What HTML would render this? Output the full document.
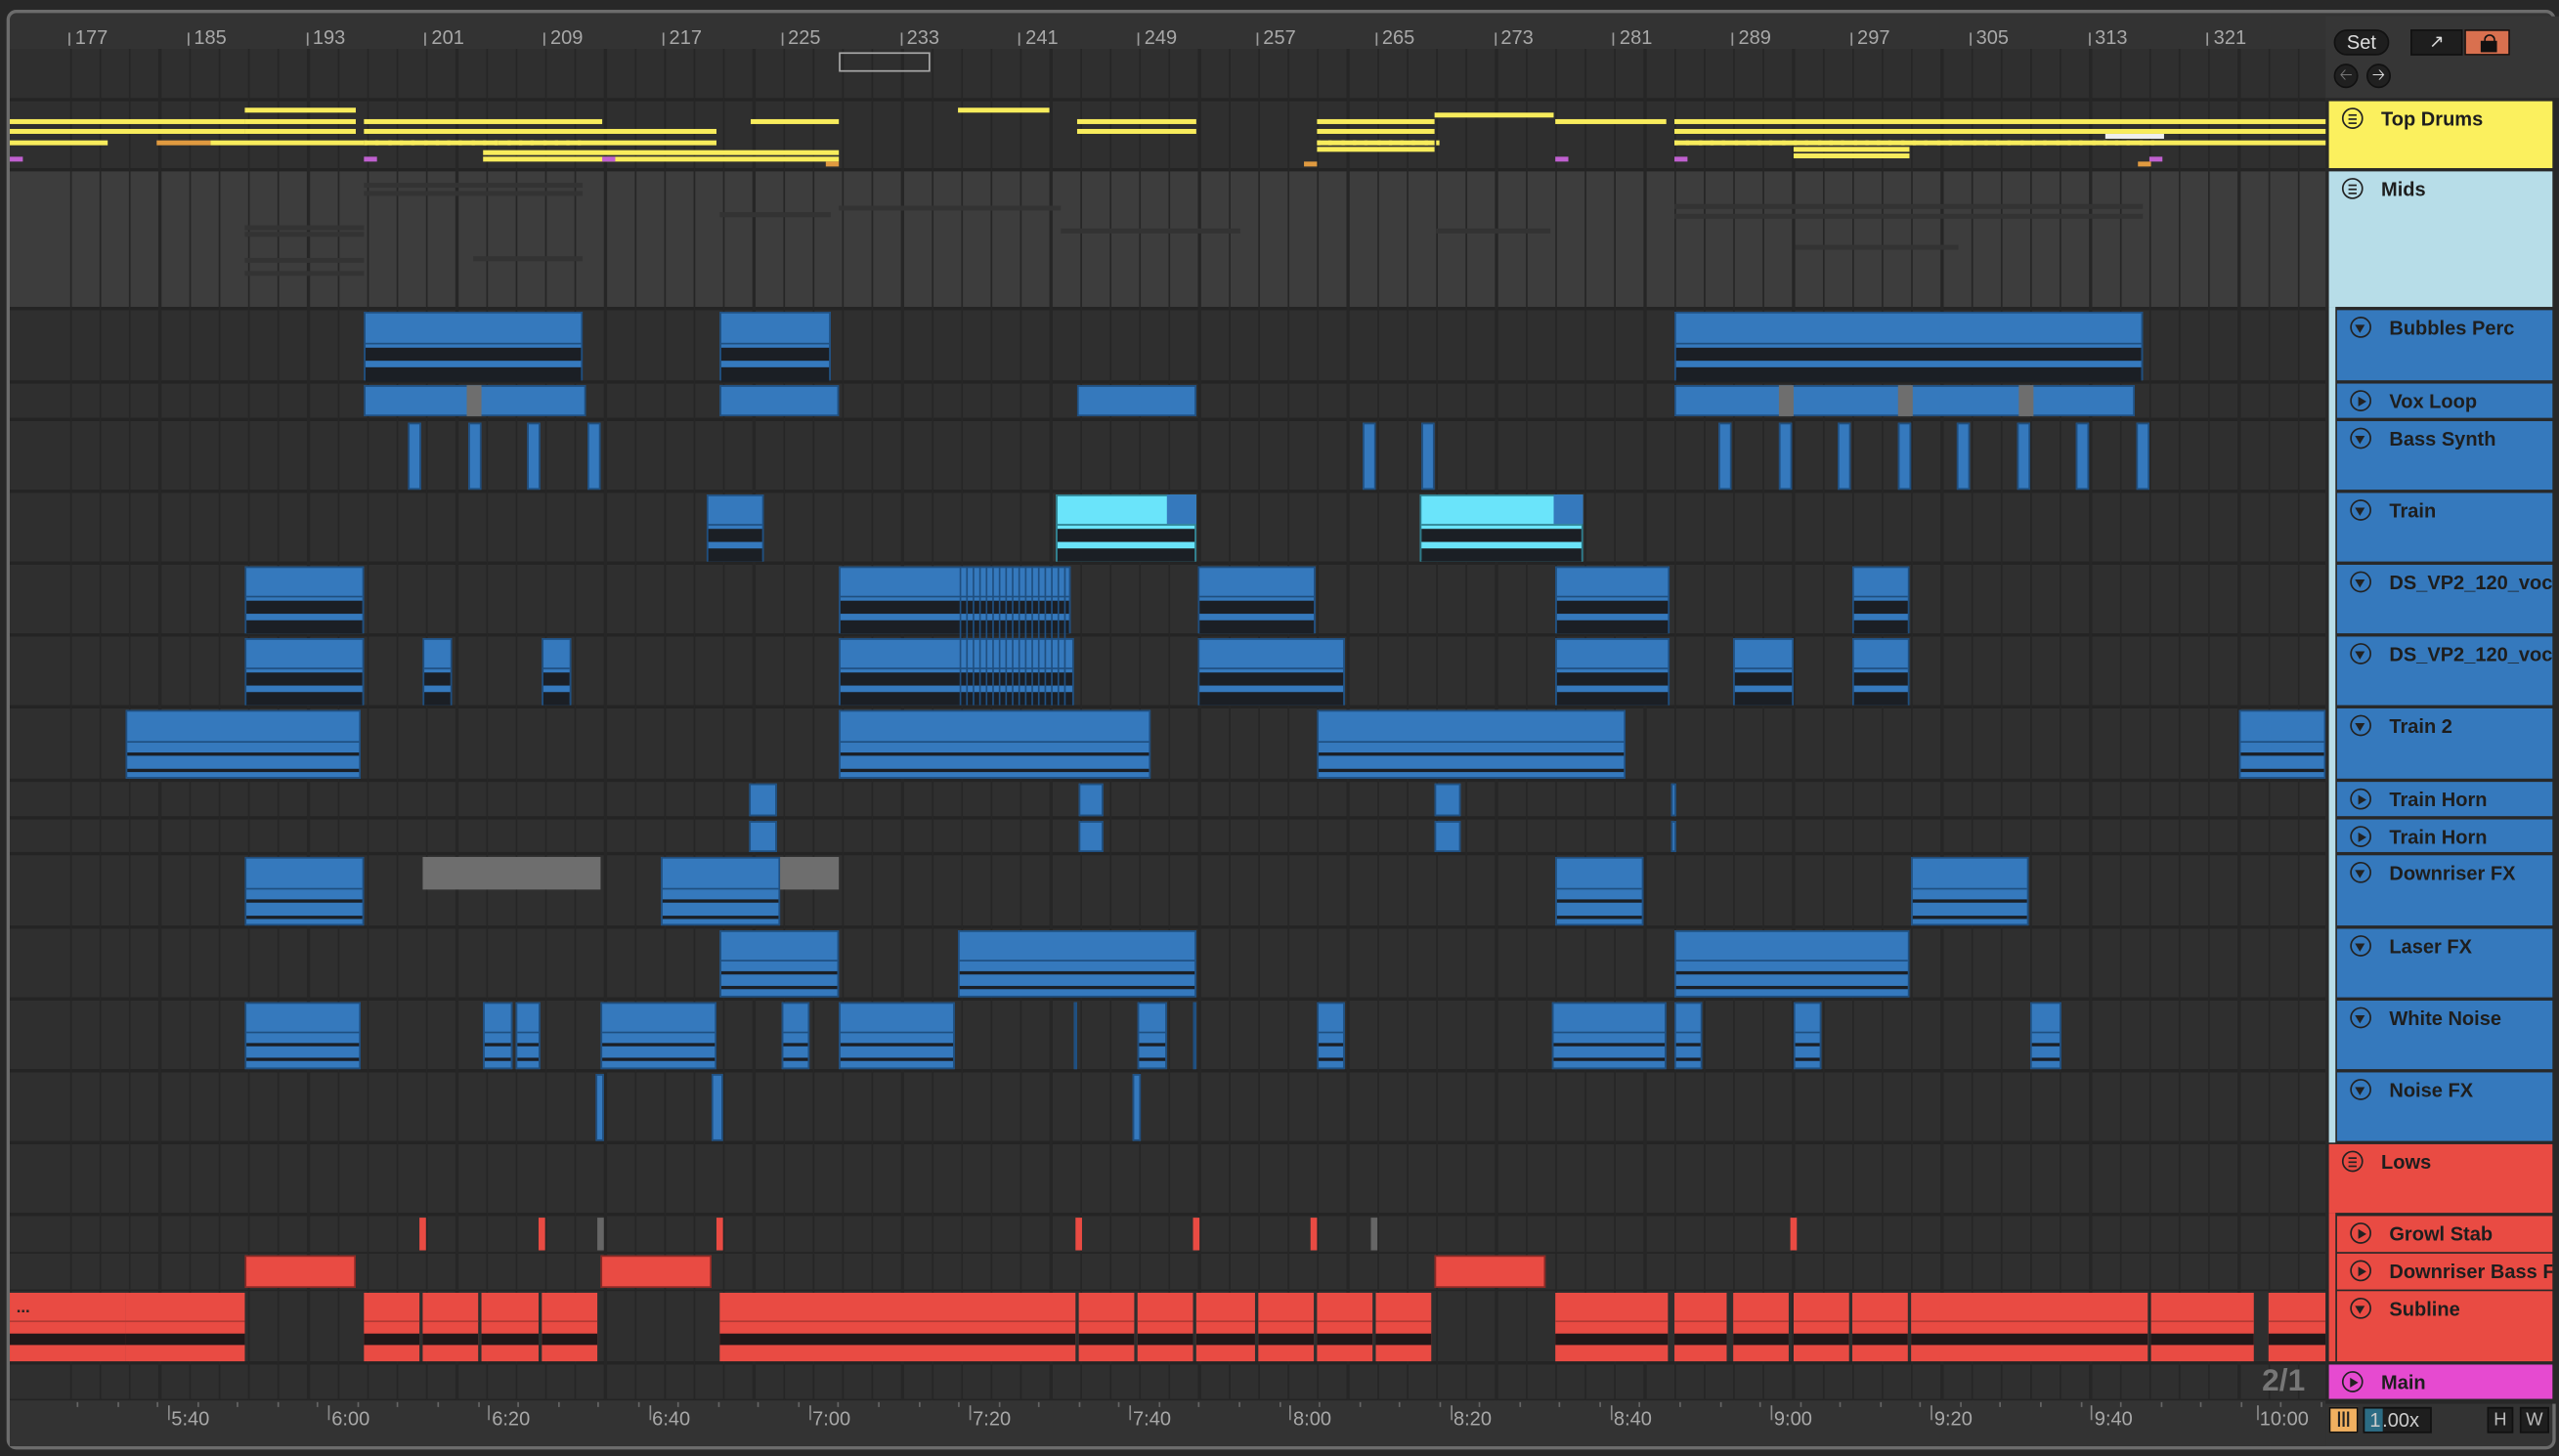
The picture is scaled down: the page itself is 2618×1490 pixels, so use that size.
<!DOCTYPE html>
<html><head><meta charset="utf-8">
<style>
html,body{margin:0;padding:0;background:#282828;width:2618px;height:1490px;overflow:hidden}
#s{position:absolute;left:0;top:0;width:1568px;height:892px;transform:scale(1.66964,1.67040);transform-origin:0 0;font-family:"Liberation Sans",sans-serif}
.a{position:absolute;box-sizing:border-box}
.hd{position:absolute;box-sizing:border-box;font-weight:bold;font-size:12px;color:#1e1e1e;padding-left:32px;padding-top:4px;white-space:nowrap;overflow:hidden}
.ic{position:absolute;left:8px;top:4px;width:13px;height:13px;border:1.3px solid #222;border-radius:50%;box-sizing:border-box}
.rn{position:absolute;font-size:12px;color:#a8a8a8}
.tn{position:absolute;font-size:12px;color:#a8a8a8}
</style></head><body>
<div id="s">
<div class="a" style="left:4px;top:6px;width:1562px;height:882px;border:2px solid #6c6c6c;border-radius:6px;background:#333"></div>
<div class="a" style="left:6px;top:60px;width:1419px;height:798px;background:#242424"></div>
</div>
<script>
var s=document.getElementById('s');
function d(x,y,w,h,st,cls,txt){var e=document.createElement('div');e.className=cls||'a';e.style.cssText='left:'+x+'px;top:'+y+'px;width:'+w+'px;height:'+h+'px;'+(st||'');if(txt)e.innerHTML=txt;s.appendChild(e);return e}
var tracks=[[62,103,'#2f2f2f'],[105,188,'#3d3d3d'],[190,233],[235,256],[258,300],[302,344],[346,388],[390,432],[434,477],[479,500],[502,522],[524,567],[569,611],[613,655],[657,699],[701,743],[745,767],[768,790],[791,834],[836,857]];
tracks.forEach(function(t){d(6,t[0],1419,t[1]-t[0],'background:'+(t[2]||'#2f2f2f'))});
d(6,30,1419,30,'background:#2f2f2f');
for(var x=6+18.2*2+0.4;x<1425;x+=18.2){d(x,30,1.2,828,'background:#262626')}
var nums=[177,185,193,201,209,217,225,233,241,249,257,265,273,281,289,297,305,313,321];
nums.forEach(function(n,i){var x=42+i*72.8;d(x,20,1,8,'background:#999');d(x+4,16,30,14,'line-height:14px',"rn",''+n)});
d(514,32,56,12,'border:1px solid #aaa;background:transparent');
[[150,223,138],[150,223,142],[223,357,112],[223,357,117],[290,357,157],[150,223,158],[150,223,166],[441,509,130],[514,650,126],[1026,1313,125],[1026,1313,131],[1100,1200,150],[650,760,140],[880,950,140]].forEach(function(l){d(l[0],l[2],l[1]-l[0],3,'background:#333')});
var Y='#f8ec5c';
[[6,150,79],[6,150,73],[6,66,86],[96,129,86,'#e09a40'],[129,223,86],[150,218,66],[150,218,73],[150,218,79],[223,369,73],[223,439,79],[223,305,86],[305,439,86],[296,514,92],[296,514,96],[460,514,73],[587,643,66],[660,733,73],[660,733,79],[807,879,73],[807,879,79],[807,879,86],[807,879,90],[879,952,69],[953,1021,73],[1026,1426,73],[1026,1426,79],[1026,1426,86],[1099,1170,90],[1099,1170,94],[1290,1326,82,'#eee']].forEach(function(l){d(l[0],l[2],l[1]-l[0],3,'background:'+(l[3]||Y))});
for(var x=223;x<360;x+=7.3)d(x,86,2,3,'background:'+Y);
for(var x=807;x<880;x+=7.3)d(x,86,2,3,'background:'+Y);
for(var x=1026;x<1320;x+=7.3)d(x,86,2,3,'background:'+Y);
[[6,96],[223,96],[369,96],[953,96],[1026,96],[1317,96]].forEach(function(p){d(p[0],p[1],8,3,'background:#c060d0')});
[[506,99],[799,99],[1310,99]].forEach(function(p){d(p[0],p[1],8,3,'background:#e09a40')});
var B='#3579bd';
function clip(x1,x2,y1,y2,col,wave,edge){
 var h=y2-y1;col=col||B;
 d(x1,y1,x2-x1,h,'background:'+col+';border:1px solid '+(edge||'#1f4f80')+';overflow:hidden');
 if(wave){var ty=Math.round(h*0.45);d(x1+1,y1+ty,x2-x1-2,1,'background:'+(edge||'#1f4f80'));
  if(wave==1){d(x1+1,y1+ty+3,x2-x1-2,h*0.2,'background:#1b1f25');d(x1+1,y1+ty+4+h*0.27,x2-x1-2,h*0.2,'background:#1b1f25');}
  else{d(x1+1,y1+ty+h*0.17,x2-x1-2,2,'background:#1b1f25');d(x1+1,y1+ty+h*0.4,x2-x1-2,2,'background:#1b1f25');}
 }
}
[[223,357],[441,509],[1026,1313]].forEach(function(c){clip(c[0],c[1],191,233,B,1)});
[[223,359],[441,514],[660,733],[1026,1308]].forEach(function(c){clip(c[0],c[1],236,255)});
[286,1090,1163,1237].forEach(function(x){d(x,236,9,19,'background:#6e6e6e')});
[250,287,323,360,835,871,1053,1090,1126,1163,1199,1236,1272,1309].forEach(function(x){clip(x,x+8,259,300)});
clip(433,468,303,344,B,1);
clip(647,733,303,344,'#6ae4fa',1,'#2c7c8c');d(715,303,18,18,'background:'+B);
clip(870,970,303,344,'#6ae4fa',1,'#2c7c8c');d(952,303,18,18,'background:'+B);
[[150,223],[514,656],[734,806],[953,1023],[1135,1170]].forEach(function(c){clip(c[0],c[1],347,388,B,1)});
[[150,223],[259,277],[332,350],[514,658],[734,824],[953,1023],[1062,1099],[1135,1170]].forEach(function(c){clip(c[0],c[1],391,432,B,1)});
for(var x=588;x<656;x+=4)d(x,347,1,85,'background:#1f4f80');
[[77,221],[514,705],[807,996],[1372,1425]].forEach(function(c){clip(c[0],c[1],435,477,B,2)});
[[459,476],[661,676],[879,895],[1024,1027]].forEach(function(c){clip(c[0],c[1],480,500);clip(c[0],c[1],503,522)});
[[150,223],[405,478],[953,1007],[1171,1243]].forEach(function(c){clip(c[0],c[1],525,567,B,2)});
d(259,525,109,20,'background:#6e6e6e');d(478,525,36,20,'background:#6e6e6e');
[[441,514],[587,733],[1026,1170]].forEach(function(c){clip(c[0],c[1],570,611,B,2)});
[[150,221],[296,314],[316,331],[368,439],[479,496],[514,585],[658,660],[697,715],[731,733],[807,824],[951,1021],[1026,1043],[1099,1116],[1244,1263]].forEach(function(c){clip(c[0],c[1],614,655,B,2)});
[[365,370],[436,443],[694,699]].forEach(function(c){clip(c[0],c[1],658,699)});
var R='#e94b43',RE='#8a2a26';
[257,330,439,659,731,803,1097].forEach(function(x){d(x,746,4,20,'background:'+R)});
[366,840].forEach(function(x){d(x,746,4,20,'background:#666')});
[[150,218],[368,436],[879,947]].forEach(function(c){d(c[0],769,c[1]-c[0],20,'background:'+R+';border:1px solid '+RE,'a')});
[[6,77],[77,150],[223,257],[259,293],[295,330],[332,366],[441,659],[661,695],[697,731],[733,769],[771,805],[807,841],[843,877],[953,1022],[1026,1058],[1062,1096],[1099,1133],[1135,1169],[1171,1316],[1318,1381],[1390,1425]].forEach(function(c){
 d(c[0],792,c[1]-c[0],42,'background:'+R);d(c[0],817,c[1]-c[0],7,'background:#221819');d(c[0],809,c[1]-c[0],1,'background:#b23a34')});
d(10,796,20,10,'color:#222;font-size:10px;font-weight:bold','a','...');
d(6,858,1419,28,'background:#333');
var tl=['5:40','6:00','6:20','6:40','7:00','7:20','7:40','8:00','8:20','8:40','9:00','9:20','9:40','10:00'];
tl.forEach(function(t,i){var x=103+i*98.2;if(i==13)x+=3;d(x,861,1,9,'background:#888');d(x+2,862,40,14,'line-height:14px',"tn",t)});
for(var x=47;x<1425;x+=24.55)d(x,859,1,3,'background:#666');
d(1386,836,40,22,'color:#777;font-size:19px;font-weight:bold;','a','2/1');
d(1425,10,143,52,'background:#363636');
d(1430,18,34,16,'background:#1e1e1e;border:1px solid #111;border-radius:8px;color:#ddd;font-size:12px;text-align:center;line-height:15px','a','Set');
d(1477,18,32,16,'background:#1e1e1e;border:1px solid #111;color:#ddd;font-size:11px;text-align:center;line-height:15px','a','&#8599;');
d(1510,18,28,16,'background:#d9704f;border:1px solid #111','a','<div style="position:absolute;left:9px;top:6px;width:10px;height:7px;background:#111"></div><div style="position:absolute;left:10.5px;top:2px;width:5px;height:5px;border:1.5px solid #111;border-bottom:none;border-radius:4px 4px 0 0"></div>');
d(1430,39,15,15,'background:#202020;border:1px solid #111;border-radius:50%;color:#777;font-size:10px;text-align:center;line-height:14px','a','&#129120;');
d(1450,39,15,15,'background:#202020;border:1px solid #111;border-radius:50%;color:#ddd;font-size:10px;text-align:center;line-height:14px','a','&#129122;');
d(1425,60,143,800,'background:#282828');
function hdr(x,y1,y2,bg,txt,ic,col){var e=d(x,y1,1564-x,y2-y1,'background:'+bg+';color:'+(col||'#1e1e1e'),'hd',txt);var i=document.createElement('div');i.className='ic';e.appendChild(i);
 if(ic=='g'){i.innerHTML='<div style="position:absolute;left:3px;top:3px;width:5px;height:1.3px;background:#222;box-shadow:0 2.5px #222,0 5px #222"></div>'}
 else if(ic=='p'){i.innerHTML='<div style="position:absolute;left:3.5px;top:2.5px;border-left:5px solid #222;border-top:3.2px solid transparent;border-bottom:3.2px solid transparent"></div>'}
 else{i.innerHTML='<div style="position:absolute;left:2.3px;top:4px;border-top:5px solid #222;border-left:3.2px solid transparent;border-right:3.2px solid transparent"></div>'}
}
hdr(1427,62,103,'#fbf05e','Top Drums','g');
hdr(1427,105,188,'#b7dde8','Mids','g');
d(1427,188,4,512,'background:#b7dde8');
var bl=[[190,233,'Bubbles Perc','d'],[235,256,'Vox Loop','p'],[258,300,'Bass Synth','d'],[302,344,'Train','d'],[346,388,'DS_VP2_120_voc','d'],[390,432,'DS_VP2_120_voc','d'],[434,477,'Train 2','d'],[479,500,'Train Horn','p'],[502,522,'Train Horn','p'],[524,567,'Downriser FX','d'],[569,611,'Laser FX','d'],[613,655,'White Noise','d'],[657,699,'Noise FX','d']];
bl.forEach(function(b){hdr(1432,b[0],b[1],'#3579bd',b[2],b[3])});
hdr(1427,701,743,'#e94b43','Lows','g');
d(1427,743,4,91,'background:#e94b43');
hdr(1432,745,767,'#e94b43','Growl Stab','p');
hdr(1432,768,790,'#e94b43','Downriser Bass F','p');
hdr(1432,791,834,'#e94b43','Subline','d');
hdr(1427,836,857,'#e64ad0','Main','p');
d(1427,862,18,16,'background:#f0b060;border:1px solid #111;color:#222;font-size:10px;text-align:center;line-height:14px;font-weight:bold','a','|||');
d(1448,862,42,16,'background:#1e1e1e;border:1px solid #111;color:#ccc;font-size:12px;line-height:15px','a','<span style="background:#2c6c84;padding:0 1px 0 3px">1</span>.00x');
d(1524,862,16,16,'background:#1e1e1e;border:1px solid #111;color:#bbb;font-size:11px;text-align:center;line-height:15px','a','H');
d(1544,862,18,16,'background:#1e1e1e;border:1px solid #111;color:#bbb;font-size:11px;text-align:center;line-height:15px','a','W');
</script>
</body></html>
